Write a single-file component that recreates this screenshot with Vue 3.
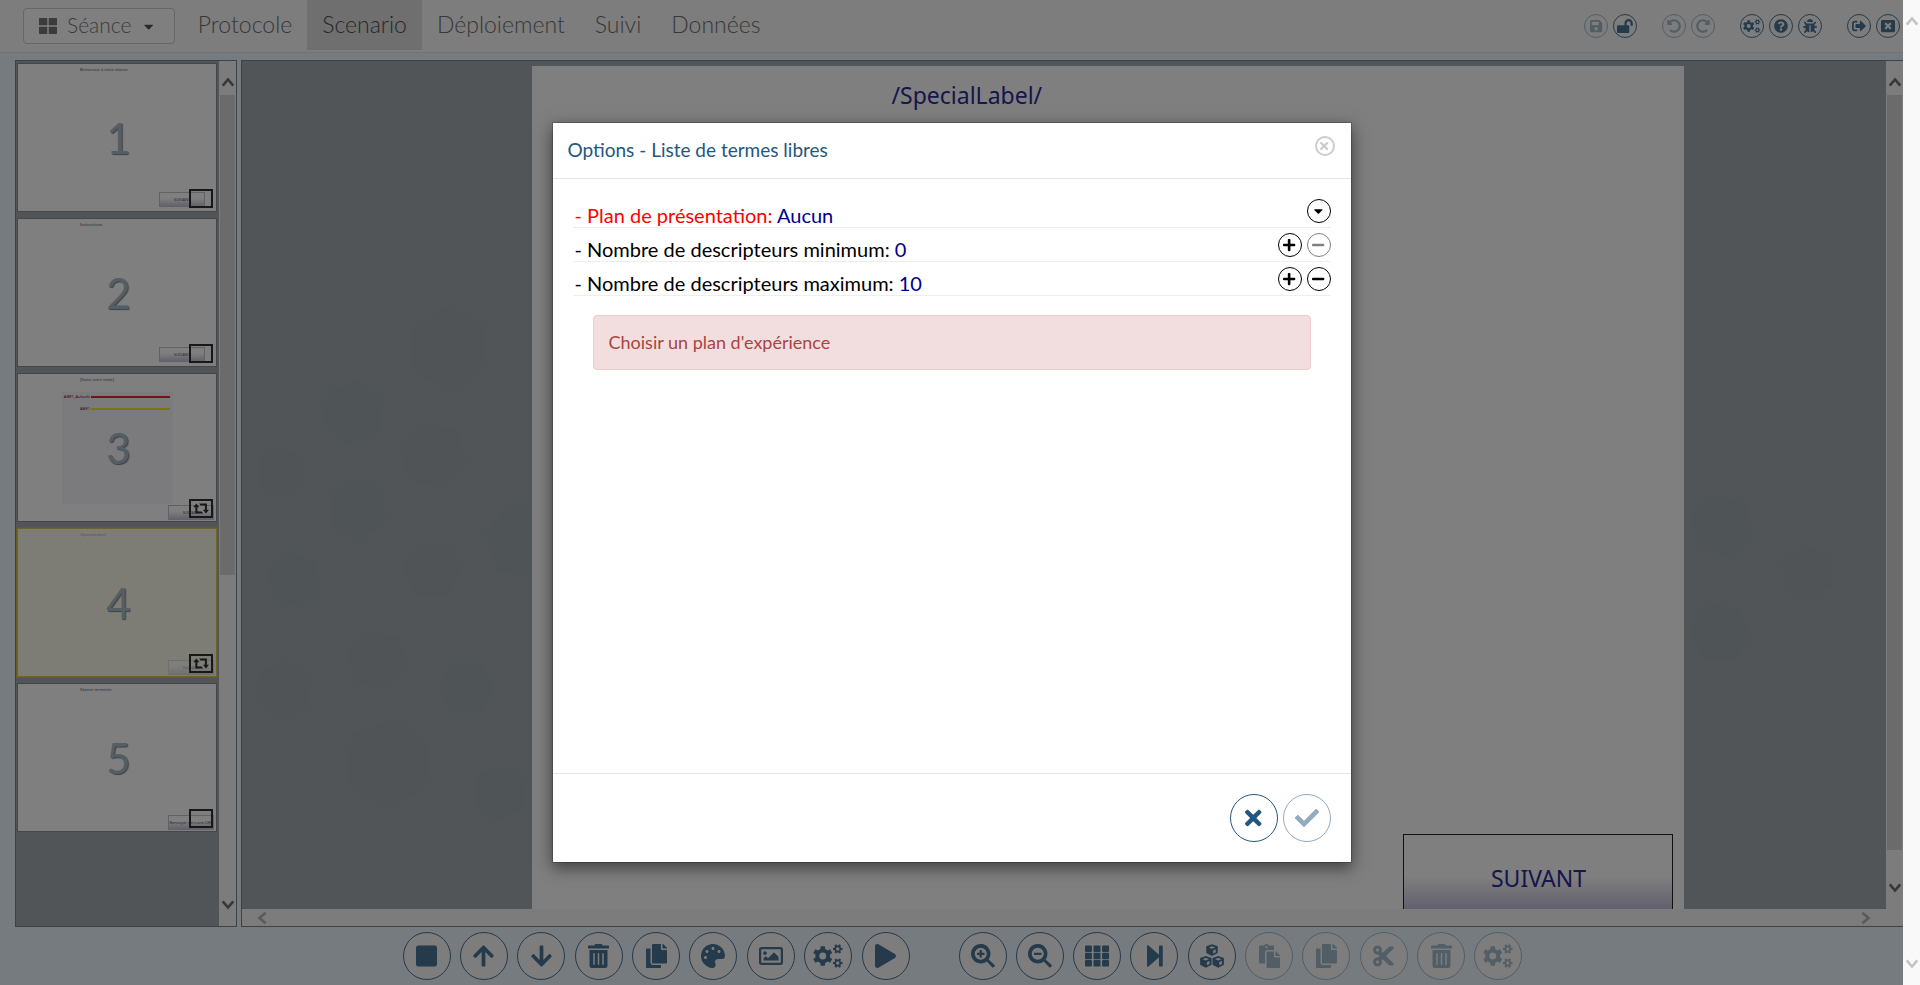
<script setup>
import { h } from 'vue'

function gear(cx, cy, outer, inner, hole, teeth, turn = 0) {
  const step = (Math.PI * 2) / teeth
  const at = (r, a) => `${(cx + r * Math.cos(a)).toFixed(1)} ${(cy + r * Math.sin(a)).toFixed(1)}`
  let d = ''
  for (let i = 0; i < teeth; i++) {
    const a = i * step + turn
    d += `${i ? 'L' : 'M'}${at(inner, a - step * 0.32)}L${at(outer, a - step * 0.2)}L${at(outer, a + step * 0.2)}L${at(inner, a + step * 0.32)}`
  }
  d += `Z M${cx - hole} ${cy}a${hole} ${hole} 0 1 0 ${hole * 2} 0a${hole} ${hole} 0 1 0 ${-hole * 2} 0Z`
  return d
}

const up = Math.PI / 6
const cube = (x, y) =>
  `M${x} ${y - 134}l122 46v142l-122 66-122-66v-142zM${x} ${y - 92}l-70 26 70 28 70-28zM${x + 24} ${y + 66}l56-28v-64l-56 24z`

const arrowUp = 'M34.900 289.500l-22.200-22.200c-9.400-9.400-9.400-24.600 0-33.900L207 39c9.400-9.400 24.600-9.400 33.900 0l194.300 194.300c9.400 9.400 9.400 24.600 0 33.900L413 289.400c-9.500 9.500-25 9.300-34.300-.4L264 168.600V456c0 13.300-10.700 24-24 24h-32c-13.300 0-24-10.700-24-24V168.600L69.200 289.100c-9.300 9.800-24.800 10-34.300.4z'
const undo = 'M255.545 8c-66.269.119-126.438 26.233-170.860 68.685L48.971 40.971C33.851 25.851 8 36.559 8 57.941V192c0 13.255 10.745 24 24 24h134.059c21.382 0 32.090-25.851 16.971-40.971l-41.750-41.750c30.864-28.899 70.801-44.907 113.230-45.273 92.398-.798 170.283 73.977 169.484 169.442C423.236 348.009 349.816 424 256 424c-41.127 0-79.997-14.678-110.630-41.556-4.743-4.161-11.906-3.908-16.368.553L89.340 422.659c-4.872 4.872-4.631 12.815.482 17.433C133.798 479.813 192.074 504 256 504c136.966 0 247.999-111.033 248-247.998C504.001 119.193 392.354 7.755 255.545 8z'
const lens = 'M208 0a208 208 0 1 0 128 372l118 126q14 14 28 0l22-22q14-14 0-28L376 328A208 208 0 0 0 208 0zM208 80a128 128 0 1 1 0 256a128 128 0 1 1 0-256z'

const icons = {
  save: [448, 'M433.941 129.941l-83.882-83.882A48 48 0 0 0 316.118 32H48C21.490 32 0 53.490 0 80v352c0 26.510 21.490 48 48 48h352c26.510 0 48-21.490 48-48V163.882a48 48 0 0 0-14.059-33.941zM224 416c-35.346 0-64-28.654-64-64 0-35.346 28.654-64 64-64s64 28.654 64 64c0 35.346-28.654 64-64 64zm96-304.520V212c0 6.627-5.373 12-12 12H76c-6.627 0-12-5.373-12-12V108c0-6.627 5.373-12 12-12h228.520c3.183 0 6.235 1.264 8.485 3.515l3.480 3.480A11.996 11.996 0 0 1 320 111.480z'],
  lock: [576, 'M423.500 0C339.500.3 272 69.500 272 153.500V224H48c-26.500 0-48 21.500-48 48v192c0 26.500 21.500 48 48 48h352c26.500 0 48-21.500 48-48V272c0-26.500-21.500-48-48-48h-48v-71.100c0-39.600 31.700-72.500 71.300-72.900 40-.4 72.700 32.100 72.700 72v80c0 13.300 10.700 24 24 24h32c13.300 0 24-10.700 24-24v-80C576 68 507.500-.3 423.500 0z'],
  undo: [512, undo],
  redo: [512, undo, 'matrix(-1 0 0 1 512 0)'],
  cogs: [640, gear(208, 256, 212, 158, 74, 6, up) + gear(528, 106, 104, 74, 36, 6) + gear(528, 406, 104, 74, 36, 6)],
  help: [512, 'M504 256c0 136.997-111.043 248-248 248S8 392.997 8 256C8 119.083 119.043 8 256 8s248 111.083 248 248zM262.655 90c-54.497 0-89.255 22.957-116.549 63.758-3.536 5.286-2.353 12.415 2.715 16.258l34.699 26.310c5.205 3.947 12.621 3.008 16.665-2.122 17.864-22.658 30.113-35.797 57.303-35.797 20.429 0 45.698 13.148 45.698 32.958 0 14.976-12.363 22.667-32.534 33.976C247.128 238.528 216 254.941 216 296v4c0 6.627 5.373 12 12 12h56c6.627 0 12-5.373 12-12v-1.333c0-28.462 83.186-29.647 83.186-106.667 0-58.002-60.165-102-116.531-102zM256 338c-25.365 0-46 20.635-46 46 0 25.364 20.635 46 46 46s46-20.636 46-46c0-25.365-20.635-46-46-46z'],
  bug: [512, 'M511.988 288.900c-.478 17.430-15.217 31.100-32.653 31.100H424v16c0 21.864-4.882 42.584-13.600 61.145l60.228 60.228c12.496 12.497 12.496 32.758 0 45.255-12.498 12.497-32.759 12.496-45.256 0l-54.736-54.736C345.886 467.965 314.351 480 280 480V236c0-6.627-5.373-12-12-12h-24c-6.627 0-12 5.373-12 12v244c-34.351 0-65.886-12.035-90.636-32.108l-54.736 54.736c-12.498 12.497-32.759 12.496-45.256 0-12.496-12.497-12.496-32.758 0-45.255l60.228-60.228C92.882 378.584 88 357.864 88 336v-16H32.666C15.230 320 .491 306.330.013 288.900-.484 270.816 14.028 256 32 256h56v-58.745l-46.628-46.628c-12.496-12.497-12.496-32.758 0-45.255 12.498-12.497 32.758-12.497 45.256 0L141.255 160h229.489l54.627-54.627c12.498-12.497 32.758-12.497 45.256 0 12.496 12.497 12.496 32.758 0 45.255L424 197.255V256h56c17.972 0 32.484 14.816 31.988 32.900zM257 0c-61.856 0-112 50.144-112 112h224C369 50.144 318.856 0 257 0z'],
  exit: [512, 'M497 273L329 441c-15 15-41 4.500-41-17v-96H152c-13.300 0-24-10.700-24-24v-96c0-13.300 10.700-24 24-24h136V88c0-21.400 25.900-32 41-17l168 168c9.300 9.400 9.300 24.600 0 34zM192 436v-40c0-6.600-5.400-12-12-12H96c-17.700 0-32-14.300-32-32V160c0-17.700 14.300-32 32-32h84c6.600 0 12-5.400 12-12V76c0-6.600-5.400-12-12-12H96c-53 0-96 43-96 96v192c0 53 43 96 96 96h84c6.600 0 12-5.400 12-12z'],
  closeWindow: [512, 'M464 32H48C21.500 32 0 53.500 0 80v352c0 26.500 21.500 48 48 48h416c26.500 0 48-21.500 48-48V80c0-26.500-21.500-48-48-48zm-83.600 290.500c4.800 4.800 4.800 12.600 0 17.400l-40.500 40.500c-4.800 4.800-12.600 4.800-17.400 0L256 313.300l-66.500 67.100c-4.800 4.800-12.600 4.800-17.400 0l-40.500-40.500c-4.800-4.800-4.800-12.600 0-17.400l67.100-66.500-67.100-66.500c-4.800-4.800-4.800-12.600 0-17.400l40.500-40.500c4.800-4.800 12.600-4.800 17.400 0l66.500 67.100 66.500-67.100c4.800-4.800 12.600-4.800 17.400 0l40.500 40.500c4.800 4.800 4.800 12.600 0 17.400L313.300 256l67.100 66.500z'],
  square: [448, 'M400 32H48C21.500 32 0 53.500 0 80v352c0 26.500 21.500 48 48 48h352c26.500 0 48-21.500 48-48V80c0-26.500-21.500-48-48-48z'],
  up: [448, arrowUp],
  down: [448, arrowUp, 'matrix(1 0 0 -1 0 512)'],
  trash: [448, 'M32 464a48 48 0 0 0 48 48h288a48 48 0 0 0 48-48V128H32zm272-256a16 16 0 0 1 32 0v224a16 16 0 0 1-32 0zm-96 0a16 16 0 0 1 32 0v224a16 16 0 0 1-32 0zm-96 0a16 16 0 0 1 32 0v224a16 16 0 0 1-32 0zM432 32H312l-9.400-18.700A24 24 0 0 0 281.100 0H166.800a23.720 23.720 0 0 0-21.400 13.300L136 32H16A16 16 0 0 0 0 48v32a16 16 0 0 0 16 16h416a16 16 0 0 0 16-16V48a16 16 0 0 0-16-16z'],
  copy: [448, 'M320 448v40c0 13.255-10.745 24-24 24H24c-13.255 0-24-10.745-24-24V120c0-13.255 10.745-24 24-24h72v296c0 30.879 25.121 56 56 56h168zm0-344V0H152c-13.255 0-24 10.745-24 24v368c0 13.255 10.745 24 24 24h272c13.255 0 24-10.745 24-24V128H344c-13.200 0-24-10.800-24-24zm120.971-31.029L375.029 7.029A24 24 0 0 0 358.059 0H352v96h96v-6.059a24 24 0 0 0-7.029-16.970z'],
  palette: [512, 'M204.300 5C104.900 24.400 24.800 104.300 5.200 203.400c-37 187 131.700 326.400 258.800 306.700 41.200-6.400 61.400-54.600 42.500-91.700-23.100-45.400 9.900-98.400 60.900-98.400h79.700c35.800 0 64.800-29.600 64.900-65.300C511.500 97.100 368.100-26.900 204.300 5zM96 320c-17.700 0-32-14.300-32-32s14.300-32 32-32 32 14.300 32 32-14.300 32-32 32zm32-128c-17.700 0-32-14.300-32-32s14.300-32 32-32 32 14.300 32 32-14.300 32-32 32zm128-64c-17.700 0-32-14.300-32-32s14.300-32 32-32 32 14.300 32 32-14.300 32-32 32zm128 64c-17.700 0-32-14.300-32-32s14.300-32 32-32 32 14.300 32 32-14.300 32-32 32z'],
  image: [512, 'M464 64H48C21.490 64 0 85.490 0 112v288c0 26.510 21.490 48 48 48h416c26.510 0 48-21.490 48-48V112c0-26.510-21.490-48-48-48zm-6 336H54a6 6 0 0 1-6-6V118a6 6 0 0 1 6-6h404a6 6 0 0 1 6 6v276a6 6 0 0 1-6 6zM128 152c-22.091 0-40 17.909-40 40s17.909 40 40 40 40-17.909 40-40-17.909-40-40-40zM96 352h320v-80l-87.515-87.515c-4.686-4.686-12.284-4.686-16.971 0L192 304l-39.515-39.515c-4.686-4.686-12.284-4.686-16.971 0L96 304v48z'],
  play: [448, 'M424.400 214.700L72.400 6.600C43.800-10.300 0 6.100 0 47.900V464c0 37.500 40.700 60.100 72.400 41.300l352-208c31.400-18.500 31.500-64.100 0-82.600z'],
  zoomIn: [512, lens + 'M184 128h48v56h56v48h-56v56h-48v-56h-56v-48h56z'],
  zoomOut: [512, lens + 'M128 184h160v48H128z'],
  grid: [512, [32, 187, 342].map((y) => [0, 182, 364].map((x) => `M${x + 20} ${y}h108q20 0 20 20v98q0 20-20 20h-108q-20 0-20-20v-98q0-20 20-20z`).join('')).join('')],
  step: [448, 'M64 468V44c0-18 20-25 32-14l224 198V56c0-14 8-24 22-24h36c14 0 22 10 22 24v400c0 14-8 24-22 24h-36c-14 0-22-10-22-24V284L96 482c-12 11-32 4-32-14z'],
  cubes: [512, cube(256, 138) + cube(124, 388) + cube(388, 388)],
  paste: [448, 'M128 184c0-30.879 25.122-56 56-56h136V56c0-13.255-10.745-24-24-24h-80.610C204.306 12.890 183.637 0 160 0s-44.306 12.890-55.390 32H24C10.745 32 0 42.745 0 56v336c0 13.255 10.745 24 24 24h104V184zm32-144c13.255 0 24 10.745 24 24s-10.745 24-24 24-24-10.745-24-24 10.745-24 24-24zm184 248h104v200c0 13.255-10.745 24-24 24H184c-13.255 0-24-10.745-24-24V184c0-13.255 10.745-24 24-24h136v104c0 13.200 10.800 24 24 24zm104-38.059V256h-96v-96h6.059a24 24 0 0 1 16.970 7.029l65.941 65.941a24.002 24.002 0 0 1 7.030 16.971z'],
  cut: [448, 'M278.060 256L444.480 89.570c4.690-4.690 4.690-12.290 0-16.970-32.800-32.800-85.990-32.800-118.790 0L210.180 188.120l-24.860-24.860c4.310-10.920 6.680-22.810 6.680-35.260 0-53.020-42.980-96-96-96S0 74.980 0 128s42.980 96 96 96c4.540 0 8.990-.32 13.360-.93L142.290 256l-32.930 32.930c-4.370-.61-8.830-.93-13.360-.93-53.020 0-96 42.980-96 96s42.980 96 96 96 96-42.980 96-96c0-12.450-2.370-24.340-6.680-35.260l24.860-24.860L325.690 439.400c32.800 32.800 85.990 32.800 118.790 0 4.690-4.680 4.690-12.280 0-16.970L278.060 256zM96 160c-17.640 0-32-14.360-32-32s14.360-32 32-32 32 14.360 32 32-14.360 32-32 32zm0 256c-17.640 0-32-14.360-32-32s14.360-32 32-32 32 14.360 32 32-14.360 32-32 32z'],
  check: [512, 'M173.898 439.404l-166.400-166.400c-9.997-9.997-9.997-26.206 0-36.204l36.203-36.204c9.997-9.998 26.207-9.998 36.204 0L192 312.690 432.095 72.596c9.997-9.997 26.207-9.997 36.204 0l36.203 36.204c9.997 9.997 9.997 26.206 0 36.204l-294.400 294.401c-9.998 9.997-26.207 9.997-36.204-.001z'],
  times: [352, 'M242.700 256l100-100c12.300-12.300 12.300-32.200 0-44.500l-22.200-22.200c-12.300-12.300-32.200-12.300-44.500 0L176 189.300 75.900 89.200c-12.300-12.300-32.200-12.300-44.500 0L9.200 111.500c-12.300 12.300-12.300 32.200 0 44.500L109.300 256 9.200 356.100c-12.300 12.300-12.300 32.200 0 44.500l22.200 22.200c12.300 12.300 32.200 12.300 44.500 0L176 322.700l100.100 100.100c12.300 12.300 32.200 12.300 44.500 0l22.200-22.200c12.300-12.300 12.300-32.200 0-44.500L242.700 256z'],
  plus: [448, 'M416 208H272V64c0-17.700-14.300-32-32-32h-32c-17.700 0-32 14.300-32 32v144H32c-17.700 0-32 14.300-32 32v32c0 17.700 14.300 32 32 32h144v144c0 17.700 14.300 32 32 32h32c17.700 0 32-14.300 32-32V304h144c17.700 0 32-14.300 32-32v-32c0-17.700-14.300-32-32-32z'],
  minus: [448, 'M416 208H32c-17.700 0-32 14.300-32 32v32c0 17.700 14.300 32 32 32h384c17.700 0 32-14.300 32-32v-32c0-17.700-14.300-32-32-32z'],
  caret: [320, 'M31.300 192h257.300c17.800 0 26.700 21.500 14.100 34.100L174.100 354.800c-7.800 7.800-20.500 7.800-28.300 0L17.200 226.100C4.600 213.500 13.500 192 31.300 192z'],
  tiles: [512, 'M20 30h198q18 0 18 18v170q0 18-18 18H20q-20 0-20-18V48q0-18 20-18zM294 30h198q20 0 20 18v170q0 18-20 18H294q-18 0-18-18V48q0-18 18-18zM20 276h198q18 0 18 18v170q0 18-18 18H20q-20 0-20-18V294q0-18 20-18zM294 276h198q20 0 20 18v170q0 18-20 18H294q-18 0-18-18V294q0-18 18-18z'],
  loop: [640, 'M130 60L250 210H172V372H340L400 452H92V210H10zM510 452L390 302H468V140H300L240 60H548V302H630z'],
}

const Icon = (props) => {
  const [w, d, transform] = icons[props.name]
  return h('svg', { class: 'icon', viewBox: `0 0 ${w} 512`, 'aria-hidden': 'true' }, [
    h('path', { d, transform, fill: 'currentColor', 'fill-rule': 'evenodd' }),
  ])
}
Icon.props = ['name']

const chevrons = { up: 'M2 11L8 4l6 7', down: 'M2 5l6 7 6-7', left: 'M11 2L4 8l7 6', right: 'M5 2l7 6-7 6' }
const Chevron = (props) =>
  h('svg', { class: 'chevron', viewBox: '0 0 16 16', 'aria-hidden': 'true' }, [
    h('path', { d: chevrons[props.dir], fill: 'none', stroke: 'currentColor', 'stroke-width': 3 }),
  ])
Chevron.props = ['dir']

const tabs = ['Protocole', 'Scenario', 'Déploiement', 'Suivi', 'Données']

const headerTools = [
  [['save', 'Enregistrer', true], ['lock', 'Déverrouiller']],
  [['undo', 'Annuler', true], ['redo', 'Rétablir', true]],
  [['cogs', 'Paramètres'], ['help', 'Aide'], ['bug', 'Signaler un bug']],
  [['exit', 'Déconnexion'], ['closeWindow', 'Fermer']],
]

const bottomTools = [
  [['square', 'Nouvel écran'], ['up', 'Monter'], ['down', 'Descendre'], ['trash', "Supprimer l'écran"], ['copy', "Dupliquer l'écran"], ['palette', 'Couleurs'], ['image', 'Arrière-plan'], ['cogs', "Options de l'écran"], ['play', 'Lancer']],
  [['zoomIn', 'Zoom avant'], ['zoomOut', 'Zoom arrière'], ['grid', 'Grille'], ['step', 'Suivant'], ['cubes', 'Composants'], ['paste', 'Coller', true], ['copy', 'Copier', true], ['cut', 'Couper', true], ['trash', 'Supprimer', true], ['cogs', 'Options', true]],
]

const slides = [
  { n: 1, title: 'Bienvenue à cette séance', next: 'SUIVANT' },
  { n: 2, title: 'Instructions', next: 'SUIVANT' },
  { n: 3, title: '[Saisir votre texte]', next: 'SUIVANT', loop: true, low: true, scales: true },
  { n: 4, title: '/SpecialLabel/', next: 'SUIVANT', loop: true, low: true, active: true },
  { n: 5, title: 'Séance terminée', next: 'Renvoyer vers une URL', low: true },
]

const options = [
  { label: 'Plan de présentation:', value: 'Aucun', missing: true, actions: [['caret', 'Choisir']] },
  { label: 'Nombre de descripteurs minimum:', value: '0', actions: [['plus', 'Augmenter'], ['minus', 'Diminuer', true]] },
  { label: 'Nombre de descripteurs maximum:', value: '10', actions: [['plus', 'Augmenter'], ['minus', 'Diminuer']] },
]

const hexagons = [
  [111, 351, 32, 3], [116, 448, 31, 2], [207, 288, 42, 1], [191, 394, 35, 1], [39, 410, 26, 1],
  [52, 519, 28, 2], [282, 480, 40, 3], [190, 509, 30, 1], [135, 599, 32, 1], [224, 627, 28, 3],
  [146, 702, 46, 1], [258, 732, 28, 2], [41, 629, 30, 1], [1480, 464, 32, 3], [1565, 512, 28, 1], [1478, 572, 31, 3],
].map(([x, y, r, tone]) => {
  const corner = (k) => {
    const a = (k * Math.PI) / 3 + (x % 7) / 9
    return `${(x + r * Math.cos(a)).toFixed(1)},${(y + r * Math.sin(a)).toFixed(1)}`
  }
  return {
    tone,
    outline: [0, 1, 2, 3, 4, 5].map(corner).join(' '),
    face: [`${x},${y}`, corner(5), corner(0), corner(1)].join(' '),
  }
})
</script>

<template>
  <div class="window">
    <div class="shell">
      <header class="topbar">
        <button class="session" type="button">
          <Icon name="tiles" /><span>Séance</span><Icon name="caret" class="caret" />
        </button>
        <nav class="tabs">
          <a v-for="t in tabs" :key="t" href="#" :class="{ current: t === 'Scenario' }">{{ t }}</a>
        </nav>
        <div class="tools">
          <div v-for="(group, i) in headerTools" :key="i" class="group">
            <button v-for="[icon, label, off] in group" :key="label" type="button" class="round" :disabled="off" :aria-label="label">
              <Icon :name="icon" />
            </button>
          </div>
        </div>
      </header>

      <main class="workspace">
        <aside class="panel slides">
          <div class="slide-list">
            <button v-for="s in slides" :key="s.n" type="button" class="slide" :class="{ active: s.active }">
              <span class="slide-title">{{ s.title }}</span>
              <span v-if="s.scales" class="scales">
                <span class="scale red">ABR1_Aubade</span>
                <span class="scale yellow">ABR1</span>
              </span>
              <span class="slide-next" :class="{ low: s.low }">{{ s.next }}</span>
              <span class="slide-number">{{ s.n }}</span>
              <span class="slide-badge"><Icon v-if="s.loop" name="loop" /></span>
            </button>
          </div>
          <div class="scroll-y">
            <button type="button" aria-label="Défiler vers le haut"><Chevron dir="up" /></button>
            <div class="track"><div class="thumb slides-thumb"></div></div>
            <button type="button" aria-label="Défiler vers le bas"><Chevron dir="down" /></button>
          </div>
        </aside>

        <section class="panel editor">
          <div class="canvas">
            <svg class="pattern" aria-hidden="true">
              <g v-for="(x, i) in hexagons" :key="i" :class="'tone' + x.tone">
                <polygon :points="x.outline" />
                <polygon :points="x.face" />
              </g>
            </svg>
            <div class="sheet">
              <h1>/SpecialLabel/</h1>
              <button type="button" class="next">SUIVANT</button>
            </div>
          </div>
          <div class="scroll-y wide">
            <button type="button" aria-label="Monter dans la page"><Chevron dir="up" /></button>
            <div class="track"><div class="thumb editor-thumb"></div></div>
            <button type="button" aria-label="Descendre dans la page"><Chevron dir="down" /></button>
          </div>
          <div class="scroll-x">
            <button type="button" aria-label="Défiler à gauche"><Chevron dir="left" /></button>
            <button type="button" aria-label="Défiler à droite"><Chevron dir="right" /></button>
          </div>
        </section>
      </main>

      <footer class="toolbar">
        <div v-for="(group, i) in bottomTools" :key="i" class="group">
          <button v-for="[icon, label, off] in group" :key="label" type="button" class="round big" :disabled="off" :aria-label="label">
            <Icon :name="icon" />
          </button>
        </div>
      </footer>

      <div class="backdrop">
        <div class="modal" role="dialog" aria-labelledby="modal-title">
          <div class="modal-head">
            <h2 id="modal-title">Options - Liste de termes libres</h2>
            <button type="button" class="dismiss" aria-label="Fermer la fenêtre"><Icon name="times" /></button>
          </div>
          <div class="modal-body">
            <div v-for="o in options" :key="o.label" class="option">
              <p><span :class="{ missing: o.missing }">- {{ o.label }}</span> <span class="value">{{ o.value }}</span></p>
              <div class="option-actions">
                <button v-for="[icon, label, off] in o.actions" :key="icon" type="button" class="round ink" :disabled="off" :aria-label="label">
                  <Icon :name="icon" />
                </button>
              </div>
            </div>
            <div class="alert" role="alert">Choisir un plan d'expérience</div>
          </div>
          <div class="modal-foot">
            <button type="button" class="round big plain" aria-label="Abandonner"><Icon name="times" /></button>
            <button type="button" class="round big plain" disabled aria-label="Valider"><Icon name="check" /></button>
          </div>
        </div>
      </div>
    </div>

    <div class="page-scroll">
      <button type="button" aria-label="Haut de page"><Chevron dir="up" /></button>
      <button type="button" aria-label="Bas de page"><Chevron dir="down" /></button>
    </div>
  </div>
</template>

<style>
body {
  margin: 0;
}
</style>

<style scoped>
.window,
.window :deep(*) {
  box-sizing: border-box;
}
.window {
  display: flex;
  height: 100vh;
  overflow: hidden;
  font-family: Lato, "Open Sans", sans-serif;
  font-weight: 300;
}
button {
  font: inherit;
  color: inherit;
  padding: 0;
  border: 0;
  background: none;
}
h1, h2, p {
  margin: 0;
  font-weight: inherit;
}
.window :deep(.icon) {
  display: block;
  height: 1em;
  overflow: visible;
}
.window :deep(.chevron) {
  display: block;
  width: 14px;
  height: 14px;
}
.shell {
  position: relative;
  display: flex;
  flex-direction: column;
  flex: 1;
  min-width: 0;
  background: #ecf6fe;
}

.topbar {
  display: flex;
  align-items: flex-start;
  height: 53px;
  padding: 0 3px 0 23px;
  background: #fafafa;
  border-bottom: 1px solid #e7e7e7;
}
.session {
  display: flex;
  align-items: center;
  height: 36px;
  margin: 8px 8px 0 0;
  padding: 0 20px 0 15px;
  border: 1px solid #ccc;
  border-radius: 4px;
  background: #fff;
  color: #777;
  font-size: 21px;
  line-height: 30px;
}
.session :deep(.icon) {
  height: 18px;
}
.session span {
  margin: 0 13px 0 10px;
  padding-bottom: 2px;
}
.session :deep(.caret) {
  height: 15px;
  color: #555;
}
.tabs {
  display: flex;
  font-size: 23px;
  line-height: 48px;
}
.tabs a {
  padding: 0 15px 2px;
  color: #707070;
  text-decoration: none;
}
.tabs a.current {
  background: #dedede;
  color: #505050;
}
.tools {
  display: flex;
  gap: 25px;
  margin: 14px 0 0 auto;
}
.group {
  display: flex;
  gap: 5px;
}
.round {
  display: flex;
  align-items: center;
  justify-content: center;
  flex: none;
  width: 24px;
  height: 24px;
  border: 1px solid currentColor;
  border-radius: 50%;
  color: #4a7496;
  font-size: 14px;
}
.round:disabled {
  color: #a4bccd;
}
.round.big {
  width: 48px;
  height: 48px;
  background: #fafafa;
  font-size: 24px;
}

.workspace {
  display: flex;
  flex: 1;
  min-height: 0;
  gap: 4px;
  padding: 7px 0 0 15px;
}
.panel {
  border: 1px solid #7c858b;
  background: #a4abaf;
  overflow: hidden;
}
.slides {
  display: flex;
  width: 222px;
}
.slide-list {
  display: flex;
  flex-direction: column;
  gap: 6px;
  flex: 1;
  padding: 2px 2px 0 1px;
}
.slide {
  position: relative;
  flex: none;
  height: 149px;
  border: 1px solid #888e92;
  background: #fff;
  text-align: left;
}
.slide.active {
  outline: 1px solid #c9b840;
  border-color: #d8c850;
  background: #fbfbea;
}
.slide-title,
.slide-next,
.scale {
  font-family: "Noto Sans", sans-serif;
  font-weight: 400;
  font-size: 4px;
  line-height: 6px;
  color: #555566;
}
.slide-title {
  position: absolute;
  top: 3px;
  left: 62px;
}
.slide-number {
  position: absolute;
  inset: 0 0 0 3px;
  font-size: 42px;
  font-weight: 400;
  line-height: 149px;
  text-align: center;
  color: #a8bccb;
  text-shadow: 1px 1px 1px #7a828a;
}
.slide-next {
  position: absolute;
  right: 11px;
  bottom: 4px;
  width: 46px;
  height: 15px;
  border: 1px solid #c4c4cc;
  background: linear-gradient(#fff 40%, #c6c4dc);
  line-height: 14px;
  text-align: center;
}
.slide-next.low {
  right: 2px;
  bottom: 1px;
}
.slide.active .slide-next,
.slide.active .slide-title {
  opacity: 0.5;
}
.slide-badge {
  position: absolute;
  right: 3px;
  bottom: 3px;
  display: flex;
  align-items: center;
  justify-content: center;
  width: 24px;
  height: 19px;
  border: 2px solid #303030;
  color: #303030;
  font-size: 13px;
}
.scales {
  position: absolute;
  top: 18px;
  left: 44px;
  width: 111px;
  height: 112px;
  padding-top: 2px;
  background: #f6f5fb;
}
.scale {
  display: block;
  width: 28px;
  height: 12px;
  color: #7a2030;
  text-align: right;
  white-space: nowrap;
  direction: rtl;
}
.scale::after {
  content: "";
  position: absolute;
  left: 29px;
  width: 79px;
  height: 2px;
  margin-top: 2px;
  background: #f02030;
}
.scale.yellow::after {
  background: #f0ec20;
}

.scroll-y {
  display: flex;
  flex-direction: column;
  width: 17px;
  padding: 0 1px;
  background: #f8f8f8;
  color: #707070;
}
.scroll-y button {
  display: flex;
  align-items: center;
  justify-content: center;
  height: 44px;
}
.scroll-y button:first-child {
  height: 34px;
  padding-top: 10px;
}
.track {
  flex: 1;
}
.thumb {
  background: #d6d6d6;
}
.slides-thumb {
  height: 61%;
}
.editor-thumb {
  height: 98%;
}
.editor {
  display: grid;
  grid-template: minmax(0, 1fr) 17px / minmax(0, 1fr) 17px;
  flex: 1;
  min-width: 0;
  border-right: 0;
}
.wide {
  grid-area: 1 / 2 / 3 / 3;
  padding-bottom: 17px;
}
.scroll-x {
  grid-area: 2 / 1 / 3 / 2;
  display: flex;
  justify-content: space-between;
  align-items: center;
  padding: 0 14px;
  background: #f8f8f8;
  color: #b4b4b4;
}
.canvas {
  position: relative;
  display: flex;
  justify-content: center;
  padding: 5px 0 0 88px;
}
.pattern {
  position: absolute;
  inset: 0;
  width: 100%;
  height: 100%;
}
.pattern polygon {
  fill: #7f9a9c;
}
.tone1 { opacity: 0.07; }
.tone2 { opacity: 0.11; }
.tone3 { opacity: 0.15; }
.sheet {
  position: relative;
  display: flex;
  flex-direction: column;
  justify-content: space-between;
  width: 74.1%;
  background: #fff;
  color: #2c2c98;
  font-family: "Noto Sans", sans-serif;
  font-weight: 400;
}
.sheet h1 {
  font-size: 23px;
  line-height: 58px;
  padding-left: 360px;
}
.next {
  align-self: flex-end;
  width: 270px;
  height: 75px;
  margin-right: 11px;
  padding-top: 11px;
  border: 1px solid #222;
  border-bottom: 0;
  background: linear-gradient(#fff 55%, #c4c0dc);
  font-size: 23px;
}

.toolbar {
  display: flex;
  justify-content: center;
  gap: 49px;
  height: 58px;
  padding: 5px 0 0 22px;
}
.toolbar .group {
  justify-content: space-between;
  gap: 0;
  width: 507px;
}
.toolbar .group:last-child {
  width: 564px;
}

.backdrop {
  position: absolute;
  inset: 0;
  display: flex;
  align-items: center;
  justify-content: center;
  background: rgba(0, 0, 0, 0.5);
}
.modal {
  display: flex;
  flex-direction: column;
  width: 800px;
  max-width: 100%;
  min-height: 741px;
  border: 1px solid rgba(0, 0, 0, 0.2);
  background: #fff;
  background-clip: padding-box;
  box-shadow: 0 5px 15px rgba(0, 0, 0, 0.5);
  font-weight: 400;
}
.modal-head {
  display: flex;
  align-items: flex-start;
  justify-content: space-between;
  height: 56px;
  padding: 13px 16px 0 15px;
  border-bottom: 1px solid #e5e5e5;
}
.modal-head h2 {
  color: #24577f;
  font-size: 19px;
  line-height: 28px;
}
.dismiss {
  display: flex;
  align-items: center;
  justify-content: center;
  width: 20px;
  height: 20px;
  border: 2px solid #ccc;
  border-radius: 50%;
  color: #ccc;
  font-size: 12px;
}
.modal-body {
  flex: 1;
  padding: 15px 20px;
}
.option {
  display: flex;
  justify-content: space-between;
  height: 34px;
  border-bottom: 1px solid #eee;
  font-size: 20px;
  line-height: 24px;
  color: #000;
}
.option p {
  padding: 9px 0 0 2px;
}
.option .missing {
  color: #f00;
}
.option .value {
  color: #00008b;
}
.option-actions {
  display: flex;
  align-items: center;
  gap: 5px;
}
.round.ink {
  color: #000;
}
.round.ink:disabled {
  color: #808080;
}
.alert {
  margin: 19px 20px 0;
  padding: 15px;
  border: 1px solid #ebccd1;
  border-radius: 4px;
  background: #f2dede;
  color: #a94442;
  font-size: 18px;
  line-height: 23px;
}
.modal-foot {
  display: flex;
  align-items: center;
  justify-content: flex-end;
  gap: 5px;
  height: 89px;
  padding-right: 20px;
  border-top: 1px solid #e5e5e5;
}
.round.plain {
  background: #fff;
  color: #24577f;
}
.round.plain:disabled {
  color: #92abbf;
}
.page-scroll {
  display: flex;
  flex-direction: column;
  align-items: center;
  justify-content: space-between;
  width: 17px;
  padding: 15px 0;
  background: #f9f9f9;
  color: #c4c4c4;
}
</style>
